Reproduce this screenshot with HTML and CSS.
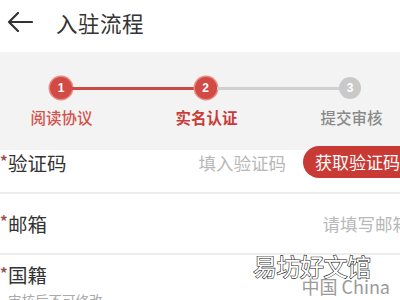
FILE: index.html
```html
<!DOCTYPE html>
<html lang="zh">
<head>
<meta charset="utf-8">
<link rel="stylesheet" href="styles.css">
</head>
<body>
<div class="page">
  <header class="header">
    <svg class="back" width="26" height="20" viewBox="0 0 26 20">
      <path d="M25 10H2M11 1L2 10l9 9" fill="none" stroke="#333" stroke-width="2.2" stroke-linecap="round" stroke-linejoin="round"/>
    </svg>
    <h1 class="title">入驻流程</h1>
  </header>
  <section class="steps">
    <div class="track">
      <span class="dot done">1</span>
      <span class="line done"></span>
      <span class="dot done">2</span>
      <span class="line"></span>
      <span class="dot">3</span>
    </div>
    <div class="labels">
      <span class="lbl done">阅读协议</span>
      <span class="lbl current">实名认证</span>
      <span class="lbl">提交审核</span>
    </div>
  </section>
  <section class="form">
    <div class="row row1">
      <div class="label"><span class="star">*</span>验证码</div>
      <div class="right">
        <span class="ph">填入验证码</span>
        <span class="btn">获取验证码</span>
      </div>
    </div>
    <div class="row row2">
      <div class="label"><span class="star">*</span>邮箱</div>
      <span class="ph">请填写邮箱</span>
    </div>
    <div class="row row3">
      <div class="lcol">
        <div class="label"><span class="star">*</span>国籍</div>
        <div class="sub">审核后不可修改</div>
      </div>
      <span class="val">中国 China</span>
    </div>
  </section>
  <div class="wm">易坊好文馆</div>
</div>
</body>
</html>
```
FILE: styles.css
```css
* { box-sizing: border-box; margin: 0; padding: 0; }
html, body { width: 400px; height: 300px; overflow: hidden; background: #fff; }
body { font-family: "Noto Sans CJK SC", "Noto Sans", sans-serif; color: #333; }
.page { position: relative; width: 400px; height: 300px; overflow: hidden; }

.header { height: 52px; display: flex; align-items: center; padding-left: 7px; padding-bottom: 8px; }
.back { display: block; }
.title { font-size: 21.5px; font-weight: 400; margin-left: 23px; color: #333; letter-spacing: 0.5px; }

.steps { background: #f3f3f3; height: 98px; padding-top: 25px; }
.track { display: flex; align-items: center; padding-left: 50px; padding-right: 39px; height: 22px; }
.dot { width: 22px; height: 22px; border-radius: 50%; background: #c9c9c9; color: #fff; font-size: 12px; font-family: "Liberation Sans", sans-serif; font-weight: 700; display: flex; align-items: center; justify-content: center; flex: none; }
.dot.done { background: #d24a44; box-shadow: 0 0 0 1.5px #e98a84; }
.line { flex: 1; height: 3px; background: #d0d0d0; }
.line.done { background: #cf4a45; }
.labels { display: grid; grid-template-columns: 145px 145px 145px; margin-left: -11px; margin-top: 9px; }
.lbl { text-align: center; font-size: 15.5px; color: #8a8a8a; line-height: 18px; font-weight: 500; }
.lbl.done { color: #d2524c; }
.lbl.current { color: #c83d3a; font-weight: 700; }

.row { display: flex; justify-content: space-between; background: #fff; border-bottom: 2px solid #ececec; }
.row1 { height: 44px; align-items: flex-start; }
.row2 { height: 61px; align-items: center; }
.row3 { height: 60px; align-items: flex-start; border-bottom: none; }
.label { font-size: 19.5px; line-height: 24px; color: #333; display: flex; align-items: center; }
.row1 .label { margin-top: 1px; }
.star { color: #9a5050; font-size: 15px; width: 8px; margin-top: -5px; font-weight: 700; }
.right { display: flex; align-items: center; margin-top: -4px; }
.ph { font-size: 17.5px; color: #b8b8b8; white-space: nowrap; }
.row1 .ph { margin-right: 17px; }
.row2 .ph { margin-right: -10px; margin-top: -1px; }
.btn { background: #c93a35; color: #fff; font-size: 17px; height: 32px; line-height: 32px; padding: 0 0 0 12px; border-radius: 16px 0 0 16px; width: 97px; white-space: nowrap; overflow: hidden; }
.lcol { margin-top: 8px; }
.sub { font-size: 13.5px; color: #a9a9a9; padding-left: 8px; margin-top: 4px; line-height: 18px; }
.val { font-size: 18px; color: #9a9a9a; margin-top: 18px; margin-right: 10px; font-family: "Noto Sans CJK SC", "Liberation Sans", sans-serif; }

.wm { position: absolute; left: 253px; top: 250px; font-size: 24px; line-height: 32px; color: #fff; -webkit-text-stroke: 1.2px #222; paint-order: stroke fill; font-family: "Noto Sans CJK SC", sans-serif; letter-spacing: -0.5px; }
```
